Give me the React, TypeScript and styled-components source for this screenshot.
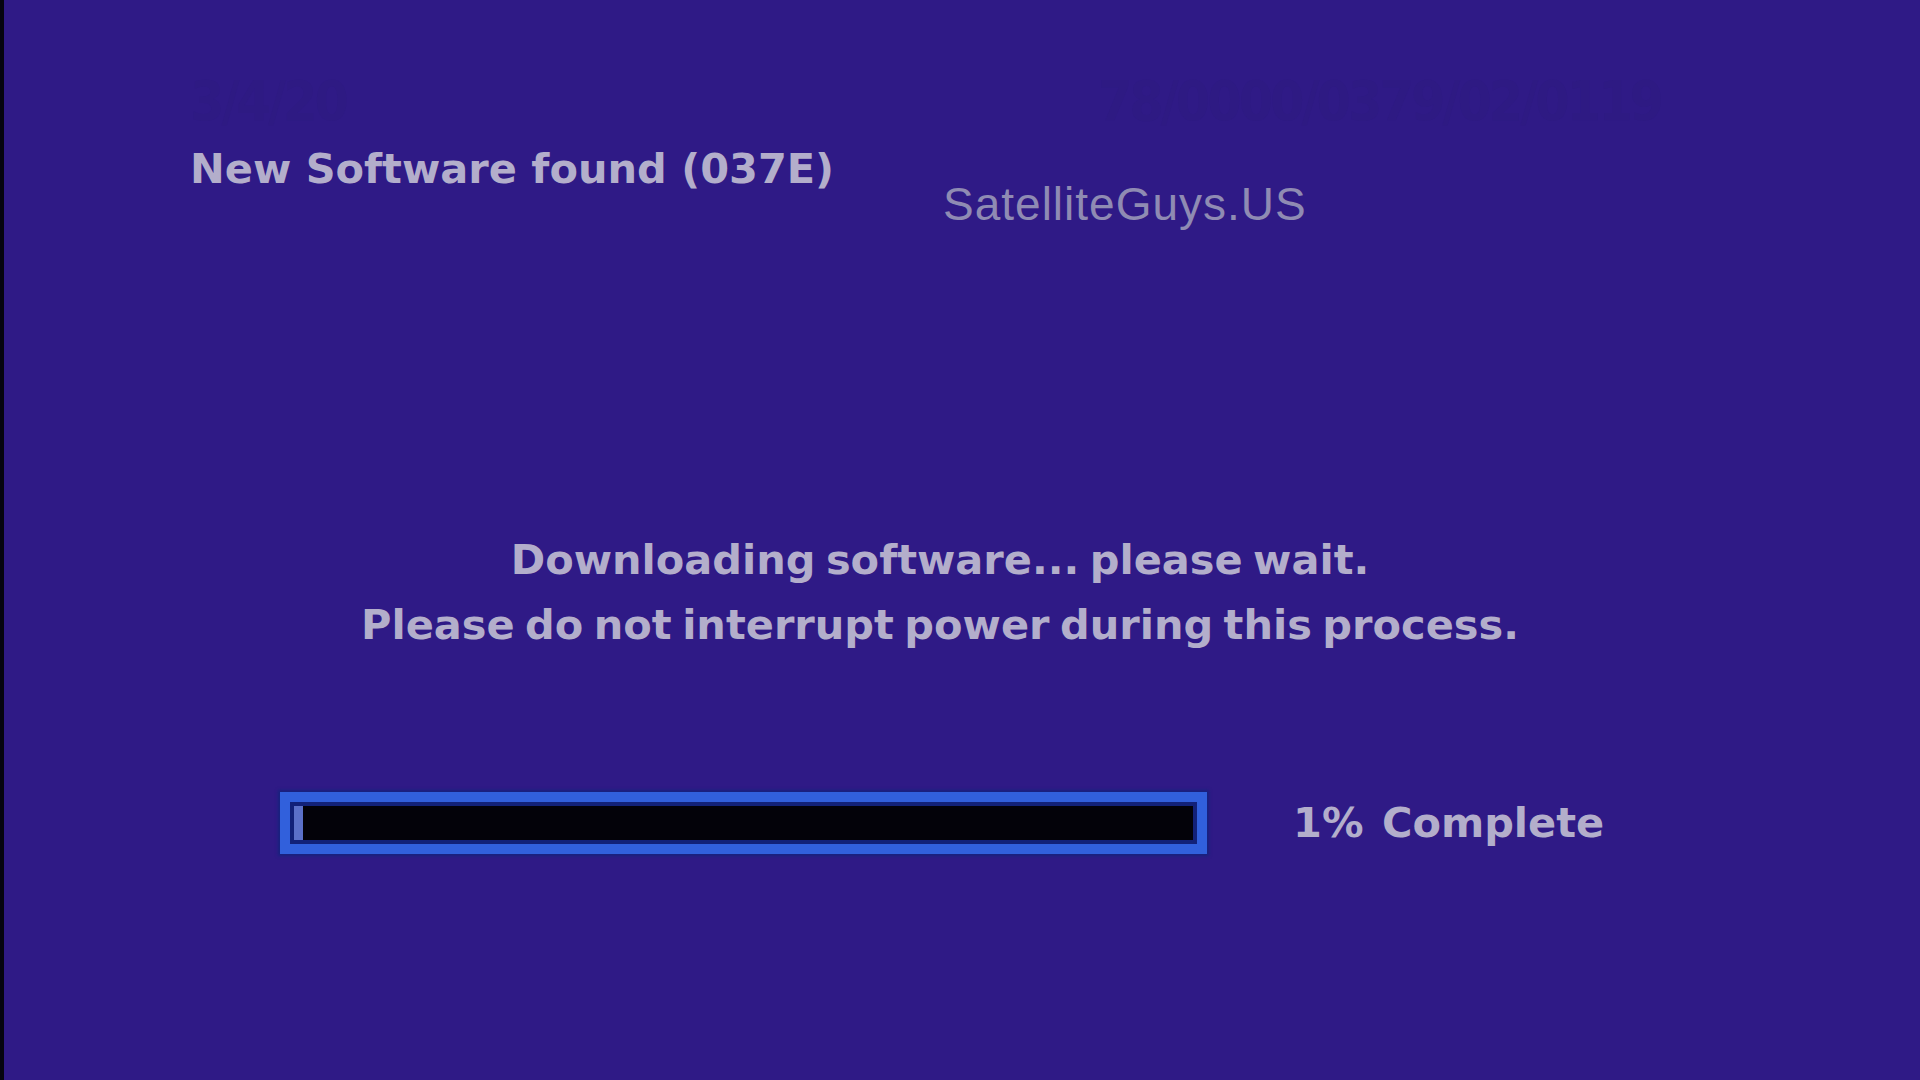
import React from "react";
import styled, { createGlobalStyle } from "styled-components";

const GlobalStyle = createGlobalStyle`
  html, body {
    margin: 0;
    padding: 0;
    background: #2f1a86;
  }
  * {
    box-sizing: border-box;
  }
`;

const Screen = styled.div`
  position: relative;
  width: 1920px;
  height: 1080px;
  overflow: hidden;
  display: flex;
  flex-direction: column;
  padding-top: 74px;
  background: #2f1a86;
  border-left: 4px solid #05040f;
  font-family: "DejaVu Sans", Verdana, sans-serif;
  font-weight: bold;
  color: #b3aecb;
`;

const GhostRow = styled.div`
  display: flex;
  height: 55px;
  padding-left: 186px;
`;

const Ghost = styled.span<{ $left?: number }>`
  font-family: "DejaVu Sans Condensed", "DejaVu Sans", sans-serif;
  font-stretch: condensed;
  font-size: 55px;
  line-height: 55px;
  letter-spacing: -3px;
  color: #2e1a83;
  margin-left: ${({ $left }) => $left || 0}px;
  white-space: nowrap;
`;

const Title = styled.div`
  margin-top: 16px;
  padding-left: 186px;
  font-size: 41.5px;
  line-height: 48px;
  white-space: nowrap;
`;

const Watermark = styled.div`
  position: absolute;
  left: 939px;
  top: 181px;
  font-family: "Liberation Sans", Arial, sans-serif;
  font-weight: normal;
  font-size: 46px;
  line-height: 46px;
  letter-spacing: 1px;
  color: #8f8bb3;
`;

const Message = styled.div`
  margin-top: 334px;
  padding-right: 44px;
  text-align: center;
  font-size: 41.5px;
  line-height: 65px;
  word-spacing: -4px;
  white-space: nowrap;
`;

const ProgressRow = styled.div`
  display: flex;
  align-items: center;
  gap: 86px;
  margin-top: 135px;
  padding-left: 276px;
`;

const Track = styled.div`
  width: 927px;
  height: 62px;
  border: 10px solid #3160dc;
  padding: 4px;
  background: #122178;
  box-shadow: 0 0 3px 2px #16237e;
`;

const Inner = styled.div`
  height: 100%;
  background: #030209;
  display: flex;
`;

const Fill = styled.div`
  min-width: 8px;
  height: 100%;
  background: #5b70c8;
`;

const Percent = styled.span`
  font-size: 41.5px;
  line-height: 48px;
  white-space: nowrap;
  word-spacing: 4px;
`;

export default function App() {
  const progress = 1;

  return (
    <>
      <GlobalStyle />
      <Screen>
        <GhostRow>
          <Ghost>3/4/20</Ghost>
          <Ghost $left={752}>78/0000/0379/02/0119</Ghost>
        </GhostRow>
        <Title>New Software found (037E)</Title>
        <Watermark>SatelliteGuys.US</Watermark>
        <Message>
          Downloading software... please wait.
          <br />
          Please do not interrupt power during this process.
        </Message>
        <ProgressRow>
          <Track>
            <Inner>
              <Fill style={{ width: `${progress}%` }} />
            </Inner>
          </Track>
          <Percent>{progress}% Complete</Percent>
        </ProgressRow>
      </Screen>
    </>
  );
}
